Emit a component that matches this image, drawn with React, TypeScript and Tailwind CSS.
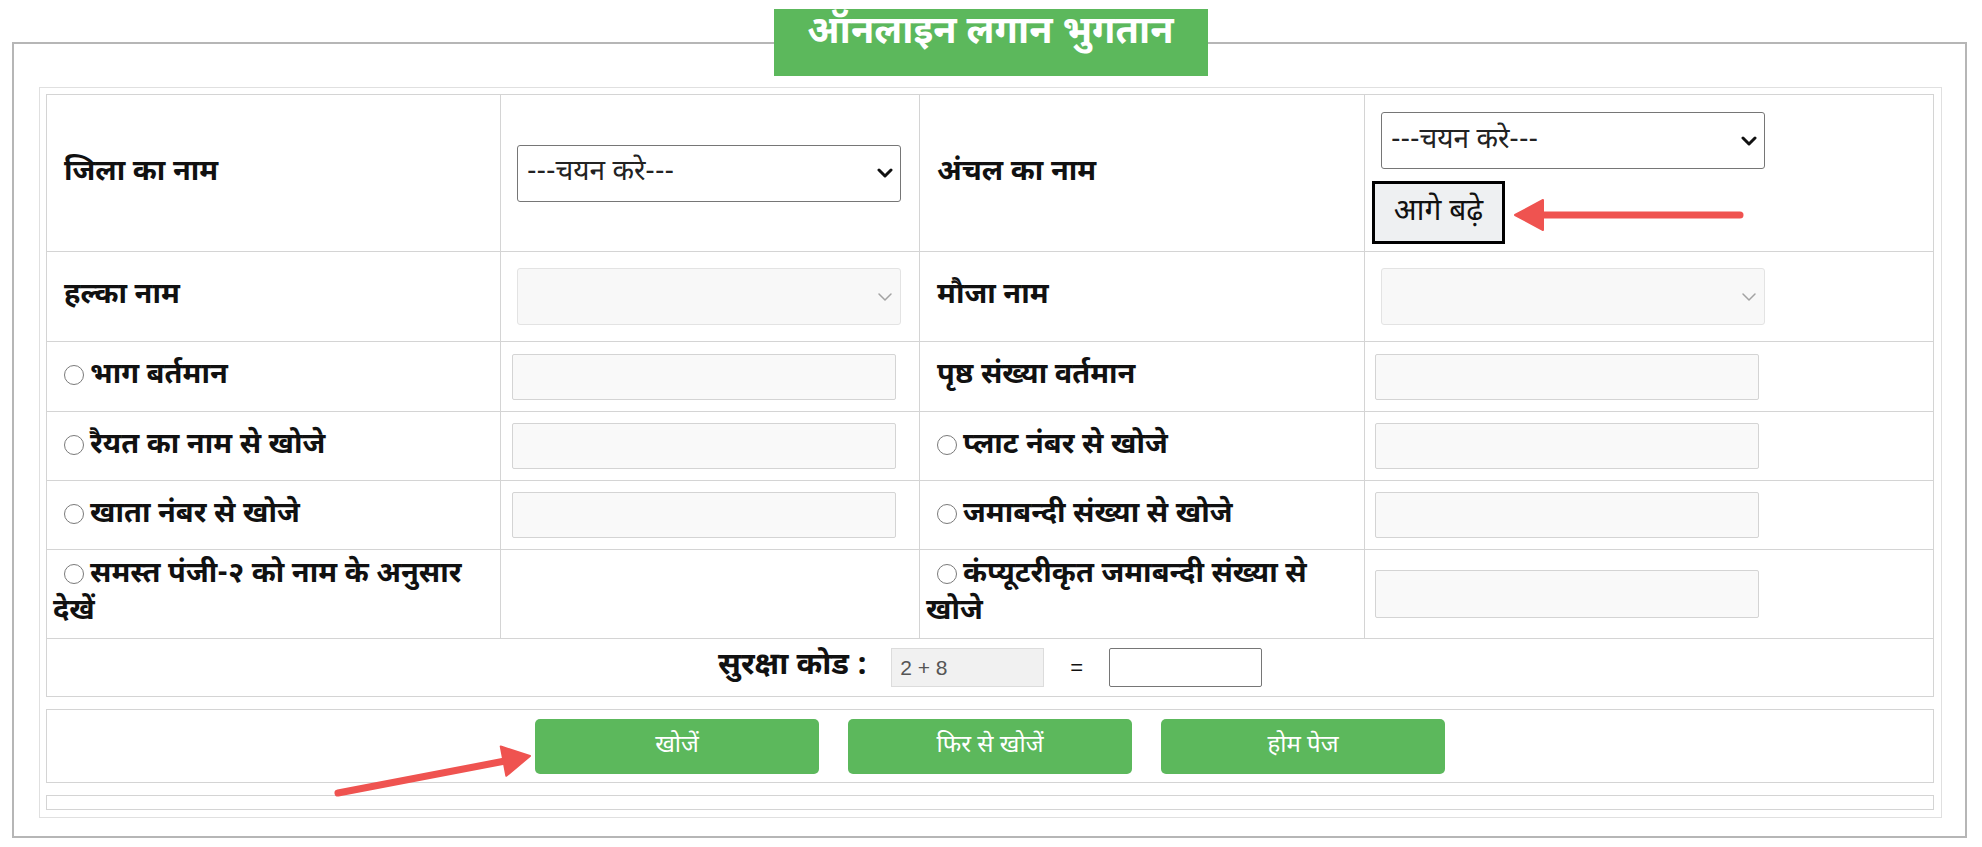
import React from 'react';

const HINDI = "font-['Noto_Sans_Devanagari','Lohit_Devanagari','Noto_Sans','Liberation_Sans',sans-serif]";

function Chevron({ disabled }: { disabled?: boolean }) {
  return (
    <svg
      className="pointer-events-none absolute right-[8px] top-1/2 -translate-y-1/2"
      width="16"
      height="10"
      viewBox="0 0 16 10"
      fill="none"
    >
      <path
        d="M2 2l6 6 6-6"
        stroke={disabled ? '#a3a3a3' : '#111'}
        strokeWidth={disabled ? 1.5 : 3}
        strokeLinecap="round"
        strokeLinejoin="round"
      />
    </svg>
  );
}

function Select({ disabled }: { disabled?: boolean }) {
  return (
    <div className="relative w-[384px] h-[57px]">
      <select
        disabled={disabled}
        className={`appearance-none w-full h-full rounded-[3px] pl-[9px] text-[28px] outline-none ${
          disabled
            ? 'bg-[#f8f8f8] border border-[#e3e3e3] text-[#999]'
            : 'bg-white border border-[#767676] text-[#222]'
        }`}
      >
        {!disabled && <option>---चयन करे---</option>}
      </select>
      <Chevron disabled={disabled} />
    </div>
  );
}

function TextBox({ h = 46 }: { h?: number }) {
  return (
    <input
      type="text"
      className={`w-[384px] ${h === 48 ? 'h-[48px]' : 'h-[46px]'} bg-[#f9f9f9] border border-[#d4d4d4] rounded-[2px] outline-none`}
    />
  );
}

function Radio() {
  return (
    <span className="inline-block align-[-2px] w-[20px] h-[20px] rounded-full border border-[#7a7a7a] bg-white mr-[6px]" />
  );
}

function Label({ children, radio }: { children: React.ReactNode; radio?: boolean }) {
  return (
    <div className="h-full flex items-center pl-[6px] pr-[8px] border-r border-b border-[#d4d4d4]">
      <p className="indent-[11px] text-[29px] font-bold leading-[37px] text-[#111]">
        {radio && <Radio />}
        {children}
      </p>
    </div>
  );
}

function Cell({ children, pl = 'pl-[16px]' }: { children?: React.ReactNode; pl?: string }) {
  return (
    <div className={`h-full flex items-center ${pl} border-r border-b border-[#d4d4d4]`}>{children}</div>
  );
}

export default function App() {
  return (
    <div className={`relative w-[1982px] h-[847px] bg-white overflow-hidden ${HINDI}`}>
      <fieldset className="ml-[12px] mt-[9px] w-[1955px] border-2 border-[#b6b6b6] pl-[25px] pr-[23px] pt-[11px] pb-[18px]">
        <legend className="mx-auto w-[434px] h-[67px] bg-[#5cb85c] flex justify-center overflow-hidden">
          <span className="text-white font-bold text-[38px] leading-[50px]">ऑनलाइन लगान भुगतान</span>
        </legend>

        <div className="border border-[#e0e0e0] pt-[6px] pl-[6px] pb-[7px] flex flex-col gap-[12px]">
          <div className="w-[1888px] grid grid-cols-[454px_419px_445px_569px] grid-rows-[157px_90px_70px_69px_69px_89px_58px] border-t border-l border-[#d4d4d4]">
            <Label>जिला का नाम</Label>
            <Cell>
              <Select />
            </Cell>
            <Label>अंचल का नाम</Label>
            <div className="h-full flex flex-col items-start pl-[16px] pt-[17px] border-r border-b border-[#d4d4d4]">
              <Select />
              <button className="mt-[12px] -ml-[9px] w-[133px] h-[63px] bg-[#eef0f2] border-[3px] border-black text-[30px] text-[#111]">
                आगे बढ़े
              </button>
            </div>

            <Label>हल्का नाम</Label>
            <Cell>
              <Select disabled />
            </Cell>
            <Label>मौजा नाम</Label>
            <Cell>
              <Select disabled />
            </Cell>

            <Label radio>भाग बर्तमान</Label>
            <Cell pl="pl-[11px]">
              <TextBox />
            </Cell>
            <Label>पृष्ठ संख्या वर्तमान</Label>
            <Cell pl="pl-[10px]">
              <TextBox />
            </Cell>

            <Label radio>रैयत का नाम से खोजे</Label>
            <Cell pl="pl-[11px]">
              <TextBox />
            </Cell>
            <Label radio>प्लाट नंबर से खोजे</Label>
            <Cell pl="pl-[10px]">
              <TextBox />
            </Cell>

            <Label radio>खाता नंबर से खोजे</Label>
            <Cell pl="pl-[11px]">
              <TextBox />
            </Cell>
            <Label radio>जमाबन्दी संख्या से खोजे</Label>
            <Cell pl="pl-[10px]">
              <TextBox />
            </Cell>

            <Label radio>समस्त पंजी-२ को नाम के अनुसार देखें</Label>
            <Cell />
            <Label radio>कंप्यूटरीकृत जमाबन्दी संख्या से खोजे</Label>
            <Cell pl="pl-[10px]">
              <TextBox h={48} />
            </Cell>

            <div className="col-span-4 h-full flex items-center justify-center border-r border-b border-[#d4d4d4]">
              <span className="text-[31px] font-bold text-[#111] mr-[24px]">सुरक्षा कोड :</span>
              <input
                readOnly
                value="2 + 8"
                className="w-[153px] h-[39px] bg-[#f1f1f1] border border-[#dcdcdc] pl-[8px] text-[21px] text-[#555] font-['Liberation_Sans',sans-serif] outline-none"
              />
              <span className="mx-[26px] text-[22px] text-[#111] font-['Liberation_Sans',sans-serif]">=</span>
              <input className="w-[153px] h-[39px] bg-white border border-[#767676] rounded-[2px] outline-none" />
            </div>
          </div>

          <div className="w-[1888px] h-[74px] border border-[#d4d4d4] flex items-center justify-center gap-[29px]">
            {['खोजें', 'फिर से खोजें', 'होम पेज'].map(t => (
              <button key={t} className="w-[284px] h-[55px] rounded-[5px] bg-[#5cb85c] text-white text-[24px]">
                {t}
              </button>
            ))}
          </div>

          <div className="w-[1888px] h-[15px] border border-[#d4d4d4]" />
        </div>
      </fieldset>

      <svg className="absolute left-[1505px] top-[195px]" width="240" height="40" viewBox="0 0 240 40">
        <line x1="34" y1="20" x2="235" y2="20" stroke="#ef5350" strokeWidth="7" strokeLinecap="round" />
        <polygon points="10,20 38,5 38,35" fill="#ef5350" strokeLinejoin="round" stroke="#ef5350" strokeWidth="2" />
      </svg>

      <svg className="absolute left-[325px] top-[735px]" width="220" height="70" viewBox="0 0 220 70">
        <line x1="13" y1="58" x2="180" y2="26" stroke="#ef5350" strokeWidth="7" strokeLinecap="round" />
        <polygon points="205,21 181.3,40.8 175.7,11.4" fill="#ef5350" stroke="#ef5350" strokeWidth="2" strokeLinejoin="round" />
      </svg>
    </div>
  );
}
